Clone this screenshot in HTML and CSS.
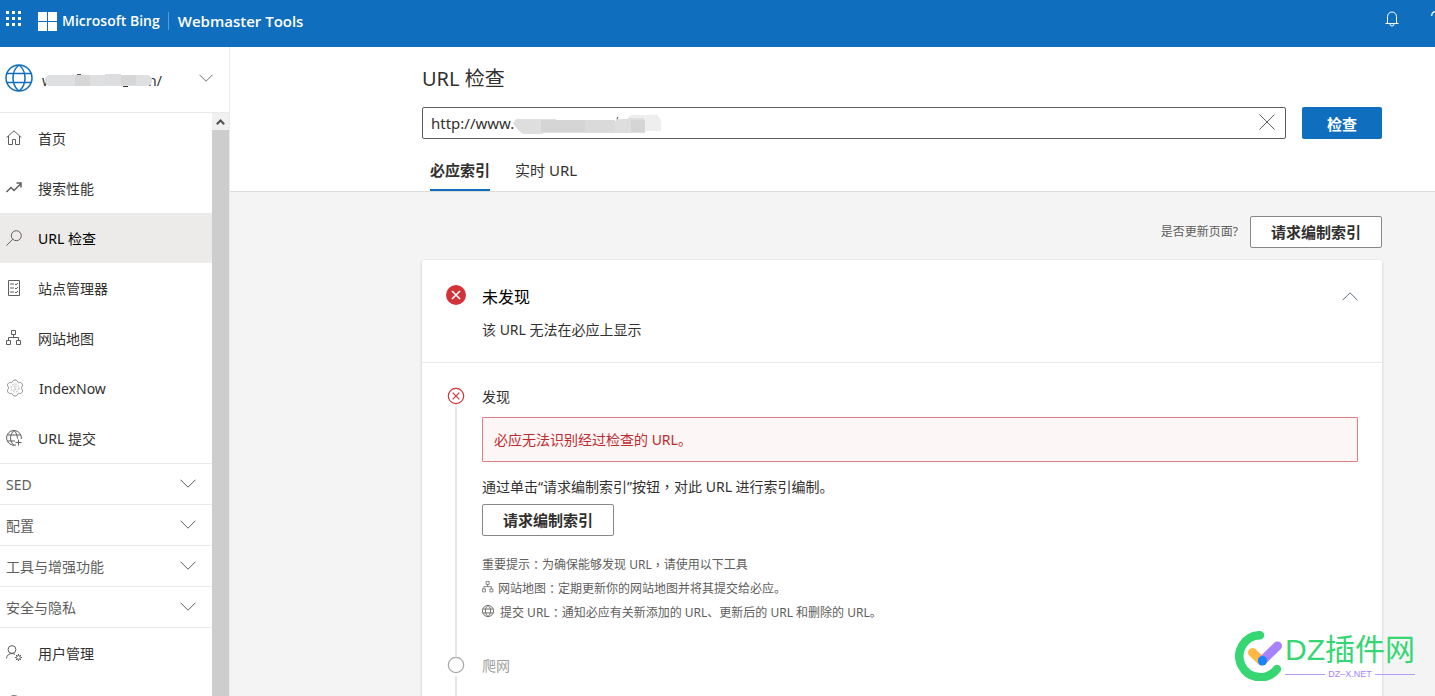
FILE: index.html
```html
<!DOCTYPE html>
<html lang="zh-CN">
<head>
<meta charset="utf-8">
<meta name="viewport" content="width=device-width, initial-scale=1">
<title>URL 检查 - Webmaster Tools</title>
<link rel="stylesheet" href="styles.css">
</head>
<body>
<svg class="defs" aria-hidden="true">
  <symbol id="chevron" viewBox="0 0 16 9"><path d="M.5.7 8 8.200 15.500.7"/></symbol>
  <symbol id="sitemap" viewBox="0 0 16 16"><path d="M5.500.5h4v4h-4zM.5 10.500h4v4h-4zM10.500 10.500h4v4h-4zM7.500 4.500v3M2.500 10.500v-3h10v3"/></symbol>
  <symbol id="globe" viewBox="0 0 28 28"><path d="M14 1a13 13 0 1 0 0 26 13 13 0 0 0 0-26zM14 1c-8 6-8 20 0 26M14 1c8 6 8 20 0 26M2 9.500h24M2 18.500h24"/></symbol>
</svg>

<header class="topbar">
  <button class="bare waffle" aria-label="应用">
    <svg width="16" height="16" viewBox="0 0 16 16" fill="#fff"><path d="M0 0h3v3H0zM6 0h3v3H6zM12 0h3v3h-3zM0 6h3v3H0zM6 6h3v3H6zM12 6h3v3h-3zM0 12h3v3H0zM6 12h3v3H6zM12 12h3v3h-3z"/></svg>
  </button>
  <a class="brand" href="#">
    <svg width="19" height="19" viewBox="0 0 19 19" fill="#fff"><path d="M0 0h9v9H0zM10 0h9v9h-9zM0 10h9v9H0zM10 10h9v9h-9z"/></svg>
    <span class="brand-name">Microsoft Bing</span>
    <span class="product">Webmaster Tools</span>
  </a>
  <button class="bare bell" aria-label="通知">
    <svg width="14" height="16" viewBox="0 0 14 16" fill="none" stroke="#fff"><path d="M2.500 12.500v-7a4.500 4.500 0 0 1 9 0v7M.5 12.500h13M5 13a2 2 0 0 0 4 0"/></svg>
  </button>
  <button class="bare help" aria-label="帮助">
    <svg width="10" height="16" viewBox="0 0 10 16" fill="none" stroke="#fff" stroke-width="1.200"><path d="M.7 5c0-6 8.500-6 8.500-.5C9.200 7.500 5 7.500 5 11.500M5 13.500v1.500"/></svg>
  </button>
</header>

<div class="shell">
  <aside class="sidebar">
    <button class="bare site">
      <svg class="line site-globe" width="28" height="28"><use href="#globe"/></svg>
      <span class="site-name">w<svg class="smudge" width="108" height="14" viewBox="0 0 108 14"><rect y="1" width="107" height="11" rx="5" fill="#dedfe0"/><path d="M30 1h15v11H30zM76 1h15v10H76z" fill="#d6d6d6"/><path d="M60 0h16v10H60z" fill="#dcdce1"/><path d="M32 .5h4" stroke="#555"/><path d="M78 12.500h5" stroke="#333"/></svg>n/</span>
      <svg class="line" width="14" height="8"><use href="#chevron"/></svg>
    </button>
    <div class="nav-area">
      <nav class="nav">
        <a class="item" href="#"><svg class="line" width="16" height="16" viewBox="0 0 16 16"><path d="M.7 7.500 8 .8l7.300 6.700M2.500 6v8.500h4v-5h3v5h4V6"/></svg>首页</a>
        <a class="item" href="#"><svg class="line bold" width="16" height="16" viewBox="0 0 16 16"><path d="m.5 12 4.500-4.500 3 3L15 3.500M10.500 3H15v4.500"/></svg>搜索性能</a>
        <a class="item current" href="#" aria-current="page"><svg class="line" width="16" height="16" viewBox="0 0 16 16"><circle cx="10.300" cy="5.700" r="5"/><path d="M6.700 9.300.5 15.500"/></svg>URL 检查</a>
        <a class="item" href="#"><svg class="line" width="16" height="16" viewBox="0 0 16 16"><path d="M2.500.5h11v15h-11zM4 4h4M4 8h4M4 12h4M9 4l1 1 2-2M9 8l1 1 2-2M9 12l1 1 2-2"/></svg>站点管理器</a>
        <a class="item" href="#"><svg class="line" width="16" height="16"><use href="#sitemap"/></svg>网站地图</a>
        <a class="item indexnow" href="#"><svg class="line" width="18" height="18" viewBox="0 0 18 18"><path d="M6.500 2.500C7 .5 11 .5 11.500 2.500c.3 1 1 1.300 2 1 2-.5 4 2.500 2.500 4-.8.8-.8 1.700 0 2.700 1.500 1.800-.5 4.800-2.500 4.300-1-.3-1.700 0-2 1-.5 2-4.500 2-5 0-.3-1-1-1.300-2-1-2 .5-4-2.500-2.500-4.300.8-1 .8-1.900 0-2.700-1.500-1.500.5-4.500 2.500-4 1 .3 1.700 0 2-1z"/><g stroke="#bbb"><circle cx="9" cy="9" r="4" stroke-dasharray="2 1"/><path d="M10.500 7.500c-3-1.500-3 1-1.500 1.500s1.500 3-1.500 1.500"/></g></svg>IndexNow</a>
        <a class="item" href="#"><svg class="line" width="16" height="16" viewBox="0 0 16 16"><path d="M10 15a7.400 7.400 0 1 1 5.300-6M8 .6c-4.600 3.500-4.600 11 0 14.800M8 .6c2.200 1.800 3.300 4.500 3.400 8M1.500 5h13M1.500 11H9M12.500 9.500v6M9.500 12.500h6"/></svg>URL 提交</a>
        <button class="bare group">SED<svg class="line" width="16" height="9"><use href="#chevron"/></svg></button>
        <button class="bare group">配置<svg class="line" width="16" height="9"><use href="#chevron"/></svg></button>
        <button class="bare group">工具与增强功能<svg class="line" width="16" height="9"><use href="#chevron"/></svg></button>
        <button class="bare group last">安全与隐私<svg class="line" width="16" height="9"><use href="#chevron"/></svg></button>
        <a class="item" href="#"><svg class="line" width="16" height="16" viewBox="0 0 16 16"><circle cx="6" cy="4.500" r="3.900"/><path d="M.5 13.500c0-3 2.500-5 5.500-5 1.200 0 2.200.3 3 1"/><circle cx="12.500" cy="12.500" r="1.900"/><path d="M12.500 9v1.500M12.500 14.500V16M9 12.500h1.500M14.500 12.500H16M10 10l1 1M14 14l1 1M15 10l-1 1M11 14l-1 1"/></svg>用户管理</a>
        <a class="item" href="#" aria-label="更多"><svg class="line" width="16" height="16" viewBox="0 0 16 16"><circle cx="8" cy="8" r="7.400"/></svg></a>
      </nav>
      <div class="scrollbar" aria-hidden="true">
        <span class="scroll-up"><svg width="9" height="6" viewBox="0 0 9 6" fill="none" stroke="#505050" stroke-width="2"><path d="m.8 5.200 3.700-3.700 3.700 3.700"/></svg></span>
      </div>
    </div>
  </aside>

  <main class="main">
    <section class="page-head">
      <h1>URL 检查</h1>
      <form class="search">
        <div class="field">
          <input type="text" value="http://www." aria-label="URL">
          <svg class="url-smudge" width="148" height="20" viewBox="0 0 148 20"><path d="M3 4h40v2h60V4h12V3q2-3 6-3h22q4 3 4 8v8h-15v2H30v1H10Q4 15 0 8z" fill="#dedede"/><path d="M116 3q2-3 6-3h22q4 3 4 8v8h-17V3z" fill="#eee"/><path d="M28 5h44v12H28zM118 5h14v12h-14z" fill="#d5d5d5"/><path d="M72 5h30v12H72z" fill="#dadada"/><path d="M104 4l1-2" stroke="#444"/></svg>
          <button type="button" class="bare clear" aria-label="清除"><svg class="line" width="16" height="16" viewBox="0 0 16 16"><path d="m.5.5 15 15M15.500.5l-15 15"/></svg></button>
        </div>
        <button type="button" class="primary">检查</button>
      </form>
      <div class="tabs" role="tablist">
        <button class="bare tab active" role="tab" aria-selected="true">必应索引</button>
        <button class="bare tab" role="tab" aria-selected="false">实时 URL</button>
      </div>
    </section>

    <section class="content">
      <div class="toolbar">
        <span>是否更新页面?</span>
        <button class="outline">请求编制索引</button>
      </div>
      <article class="card">
        <header class="card-head">
          <svg width="20" height="20" viewBox="0 0 20 20"><circle cx="10" cy="10" r="10" fill="#d13438"/><path d="m6 6 8 8M14 6l-8 8" stroke="#fff" stroke-width="1.600"/></svg>
          <div class="status">
            <h2>未发现</h2>
            <p>该 URL 无法在必应上显示</p>
          </div>
          <button class="bare collapse" aria-label="折叠"><svg class="line flip" width="16" height="9"><use href="#chevron"/></svg></button>
        </header>
        <div class="step">
          <div class="rail"><svg width="18" height="18" viewBox="0 0 18 18" fill="none" stroke="#d13438" stroke-width="1.200"><circle cx="9" cy="9" r="7.700"/><path d="m5.700 5.700 6.600 6.600M12.300 5.700l-6.600 6.600"/></svg></div>
          <div class="step-body">
            <h3>发现</h3>
            <p class="alert">必应无法识别经过检查的 URL。</p>
            <p class="advice">通过单击“请求编制索引”按钮<span class="mid" lang="zh-TW">，</span>对此 URL 进行索引编制。</p>
            <button class="outline">请求编制索引</button>
            <div class="notes">
              <p>重要提示<span class="mid" lang="zh-TW">：</span>为确保能够发现 URL<span class="mid" lang="zh-TW">，</span>请使用以下工具</p>
              <p><svg class="line tool" width="12" height="12"><use href="#sitemap"/></svg><a href="#">网站地图</a><span class="mid" lang="zh-TW">：</span>定期更新你的网站地图并将其提交给必应。</p>
              <p><svg class="line tool wide" width="12" height="12"><use href="#globe"/></svg><a href="#">提交 URL</a><span class="mid" lang="zh-TW">：</span>通知必应有关新添加的 URL、更新后的 URL 和删除的 URL。</p>
            </div>
          </div>
        </div>
        <div class="step pending">
          <div class="rail"><svg width="18" height="18" viewBox="0 0 18 18" fill="none" stroke="#a6a6a6" stroke-width="1.200"><circle cx="9" cy="9" r="7.700"/></svg></div>
          <div class="step-body"><h3>爬网</h3></div>
        </div>
      </article>
    </section>
  </main>
</div>

<div class="watermark">
  <svg width="48" height="50" viewBox="0 0 48 50" fill="none" stroke-linecap="round"><path d="M25 4.200A21 21 0 1 0 42 38" stroke="#36d673" stroke-width="8.500"/><path d="m17.500 21.500 9 8.500" stroke="#ffb942" stroke-width="9"/><path d="M27.500 29.500 42.500 15" stroke="#a782ff" stroke-width="9"/><path d="M27.500 29.500v.5" stroke="#1684ff" stroke-width="9"/></svg>
  <div class="mark-text">
    <span class="mark-name">DZ插件网</span>
    <span class="mark-url">DZ–X.NET</span>
  </div>
</div>
</body>
</html>
```
FILE: styles.css
```css
* { box-sizing: border-box; }
body {
  margin: 0;
  height: 100vh;
  overflow: hidden;
  display: flex;
  flex-direction: column;
  position: relative;
  background: #f4f4f4;
  color: #323130;
  font: 14px/20px "Noto Sans", "Noto Sans CJK SC", sans-serif;
}
h1, h2, h3, p { margin: 0; font-weight: 400; }
a { color: inherit; text-decoration: none; }
button, input { font: inherit; color: inherit; }
.bare { background: none; border: 0; padding: 0; text-align: left; }
.defs { display: none; }
svg { flex: none; display: block; }
.line { fill: none; stroke: #605e5c; stroke-width: 1; overflow: visible; }
.bold { stroke-width: 1.5; }
.flip { transform: rotate(180deg); }

/* top bar */
.topbar {
  flex: none;
  display: flex;
  align-items: center;
  height: 47px;
  padding: 0 0 5px 6px;
  background: #106ebe;
  color: #fff;
}
.waffle { margin: 0 16px 4px 0; }
.brand { display: flex; align-items: center; font-family: "Open Sans", sans-serif; }
.brand-name {
  margin-left: 5px;
  padding-right: 8px;
  border-right: 1px solid #5b9bd3;
  font-size: 14px;
  font-weight: 600;
  line-height: 18px;
}
.product { padding-left: 9px; font-size: 15px; font-weight: 600; }
.bell { margin: 0 32px 4px auto; }
.help { margin: 0 -6px 4px 0; }

.shell { flex: 1; display: flex; min-height: 0; }

/* sidebar */
.sidebar {
  flex: none;
  width: 230px;
  display: flex;
  flex-direction: column;
  background: #fff;
  border-right: 1px solid #eaeaea;
}
.site {
  flex: none;
  display: flex;
  align-items: center;
  height: 66px;
  padding: 0 16px 4px 5px;
  border-bottom: 1px solid #eaeaea;
}
.site-globe { stroke: #106ebe; stroke-width: 1.5; }
.site-name { flex: 1; display: flex; align-items: center; padding: 6px 0 0 9px; }
.smudge { margin: 0 -5px 0 -8px; position: relative; }
.nav-area { flex: 1; display: flex; min-height: 0; }
.nav { flex: 1; overflow: hidden; }
.item { display: flex; align-items: center; gap: 16px; height: 50px; padding: 2px 6px 0; }
.item svg { margin-bottom: 3px; }
.indexnow { gap: 15px; }
.indexnow svg { stroke: #8a8886; }
.current { background: #edebe9; color: #000; }
.group {
  display: flex;
  align-items: center;
  justify-content: space-between;
  width: 100%;
  height: 41px;
  padding: 2px 16px 0 6px;
  border-top: 1px solid #eaeaea;
  color: #605e5c;
}
.group svg { margin-bottom: 4px; }
.last { height: 42px; border-bottom: 1px solid #eaeaea; }
.scrollbar { flex: none; width: 17px; background: #cdcdcd; }
.scroll-up { display: flex; align-items: center; justify-content: center; height: 17px; background: #f0f0f0; }

/* page head */
.main { flex: 1; min-width: 0; }
.page-head { padding: 17px 53px 0 192px; background: #fff; border-bottom: 1px solid #dcdcdc; }
h1 { font-size: 20px; line-height: 30px; margin-bottom: 13px; }
.search { display: flex; gap: 16px; }
.field { flex: 1; position: relative; display: flex; }
.field input {
  flex: 1;
  min-width: 0;
  height: 32px;
  padding: 0 40px 0 8px;
  border: 1px solid #605e5c;
  border-radius: 2px;
  background: #fff;
  font-size: 15px;
}
.url-smudge { position: absolute; left: 91px; top: 8px; }
.clear { position: absolute; right: 11px; top: 7px; }
.primary {
  width: 80px;
  height: 32px;
  padding: 1px 0 0;
  border: 0;
  border-radius: 2px;
  background: #106ebe;
  color: #fff;
  font-size: 15px;
  font-weight: 600;
}
.tabs { display: flex; gap: 25px; padding: 10px 8px 0; }
.tab { height: 42px; padding-top: 2px; border-bottom: 2px solid transparent; font-size: 15px; }
.active { border-color: #106ebe; font-weight: 600; }

/* content */
.content { padding: 24px 53px 0 192px; }
.toolbar {
  display: flex;
  align-items: center;
  justify-content: flex-end;
  gap: 12px;
  margin-bottom: 12px;
  color: #605e5c;
  font-size: 12px;
}
.outline {
  width: 132px;
  height: 32px;
  padding: 0;
  border: 1px solid #8a8886;
  border-radius: 2px;
  background: #fff;
  color: #323130;
  font-size: 15px;
  font-weight: 600;
}
.card { background: #fff; border-radius: 2px; box-shadow: 0 1px 3px rgba(0, 0, 0, .2); }
.card-head {
  display: flex;
  align-items: flex-start;
  gap: 16px;
  height: 103px;
  padding: 25px 24px 0;
  border-bottom: 1px solid #eaeaea;
}
.status { flex: 1; }
h2 { color: #000; font-size: 16px; line-height: 24px; margin-bottom: 11px; }
.collapse { margin-top: 7px; }
.collapse svg { stroke: #5a6f8a; }
.step { display: flex; gap: 17px; padding: 24px 24px 0 25px; }
.rail { flex: none; width: 18px; display: flex; flex-direction: column; align-items: center; gap: 2px; }
.rail::after { content: ""; flex: 1; width: 2px; background: #e6e6e6; }
.step-body { flex: 1; }
h3 { font-size: 14px; line-height: 20px; }
.alert {
  margin: 10px 0 14px;
  padding: 12px 11px 11px;
  border: 1px solid #e37d80;
  border-radius: 1px;
  background: #fdf6f6;
  color: #c02a2e;
}
.advice { margin-bottom: 7px; }
.mid { font-family: "Noto Sans CJK TC", sans-serif; }
.notes { padding: 17px 0 31px; color: #605e5c; font-size: 12px; line-height: 24px; }
.notes p { display: flex; }
.tool { margin: 4px 4px 0 0; }
.wide { margin-right: 6px; stroke-width: 2; }
.pending { padding-top: 0; color: #a19f9d; }
.pending .rail { min-height: 60px; }

/* watermark */
.watermark { position: absolute; right: 20px; bottom: 15px; display: flex; gap: 2px; }
.mark-text { display: flex; flex-direction: column; color: #36d673; font-family: "Liberation Sans", "Noto Sans CJK SC", sans-serif; }
.mark-name { font-size: 30px; line-height: 38px; }
.mark-url { display: flex; align-items: center; gap: 3px; color: #a782ff; font-size: 9px; line-height: 10px; }
.mark-url::before, .mark-url::after { content: ""; flex: 1; height: 1px; background: #b79bff; }
```
